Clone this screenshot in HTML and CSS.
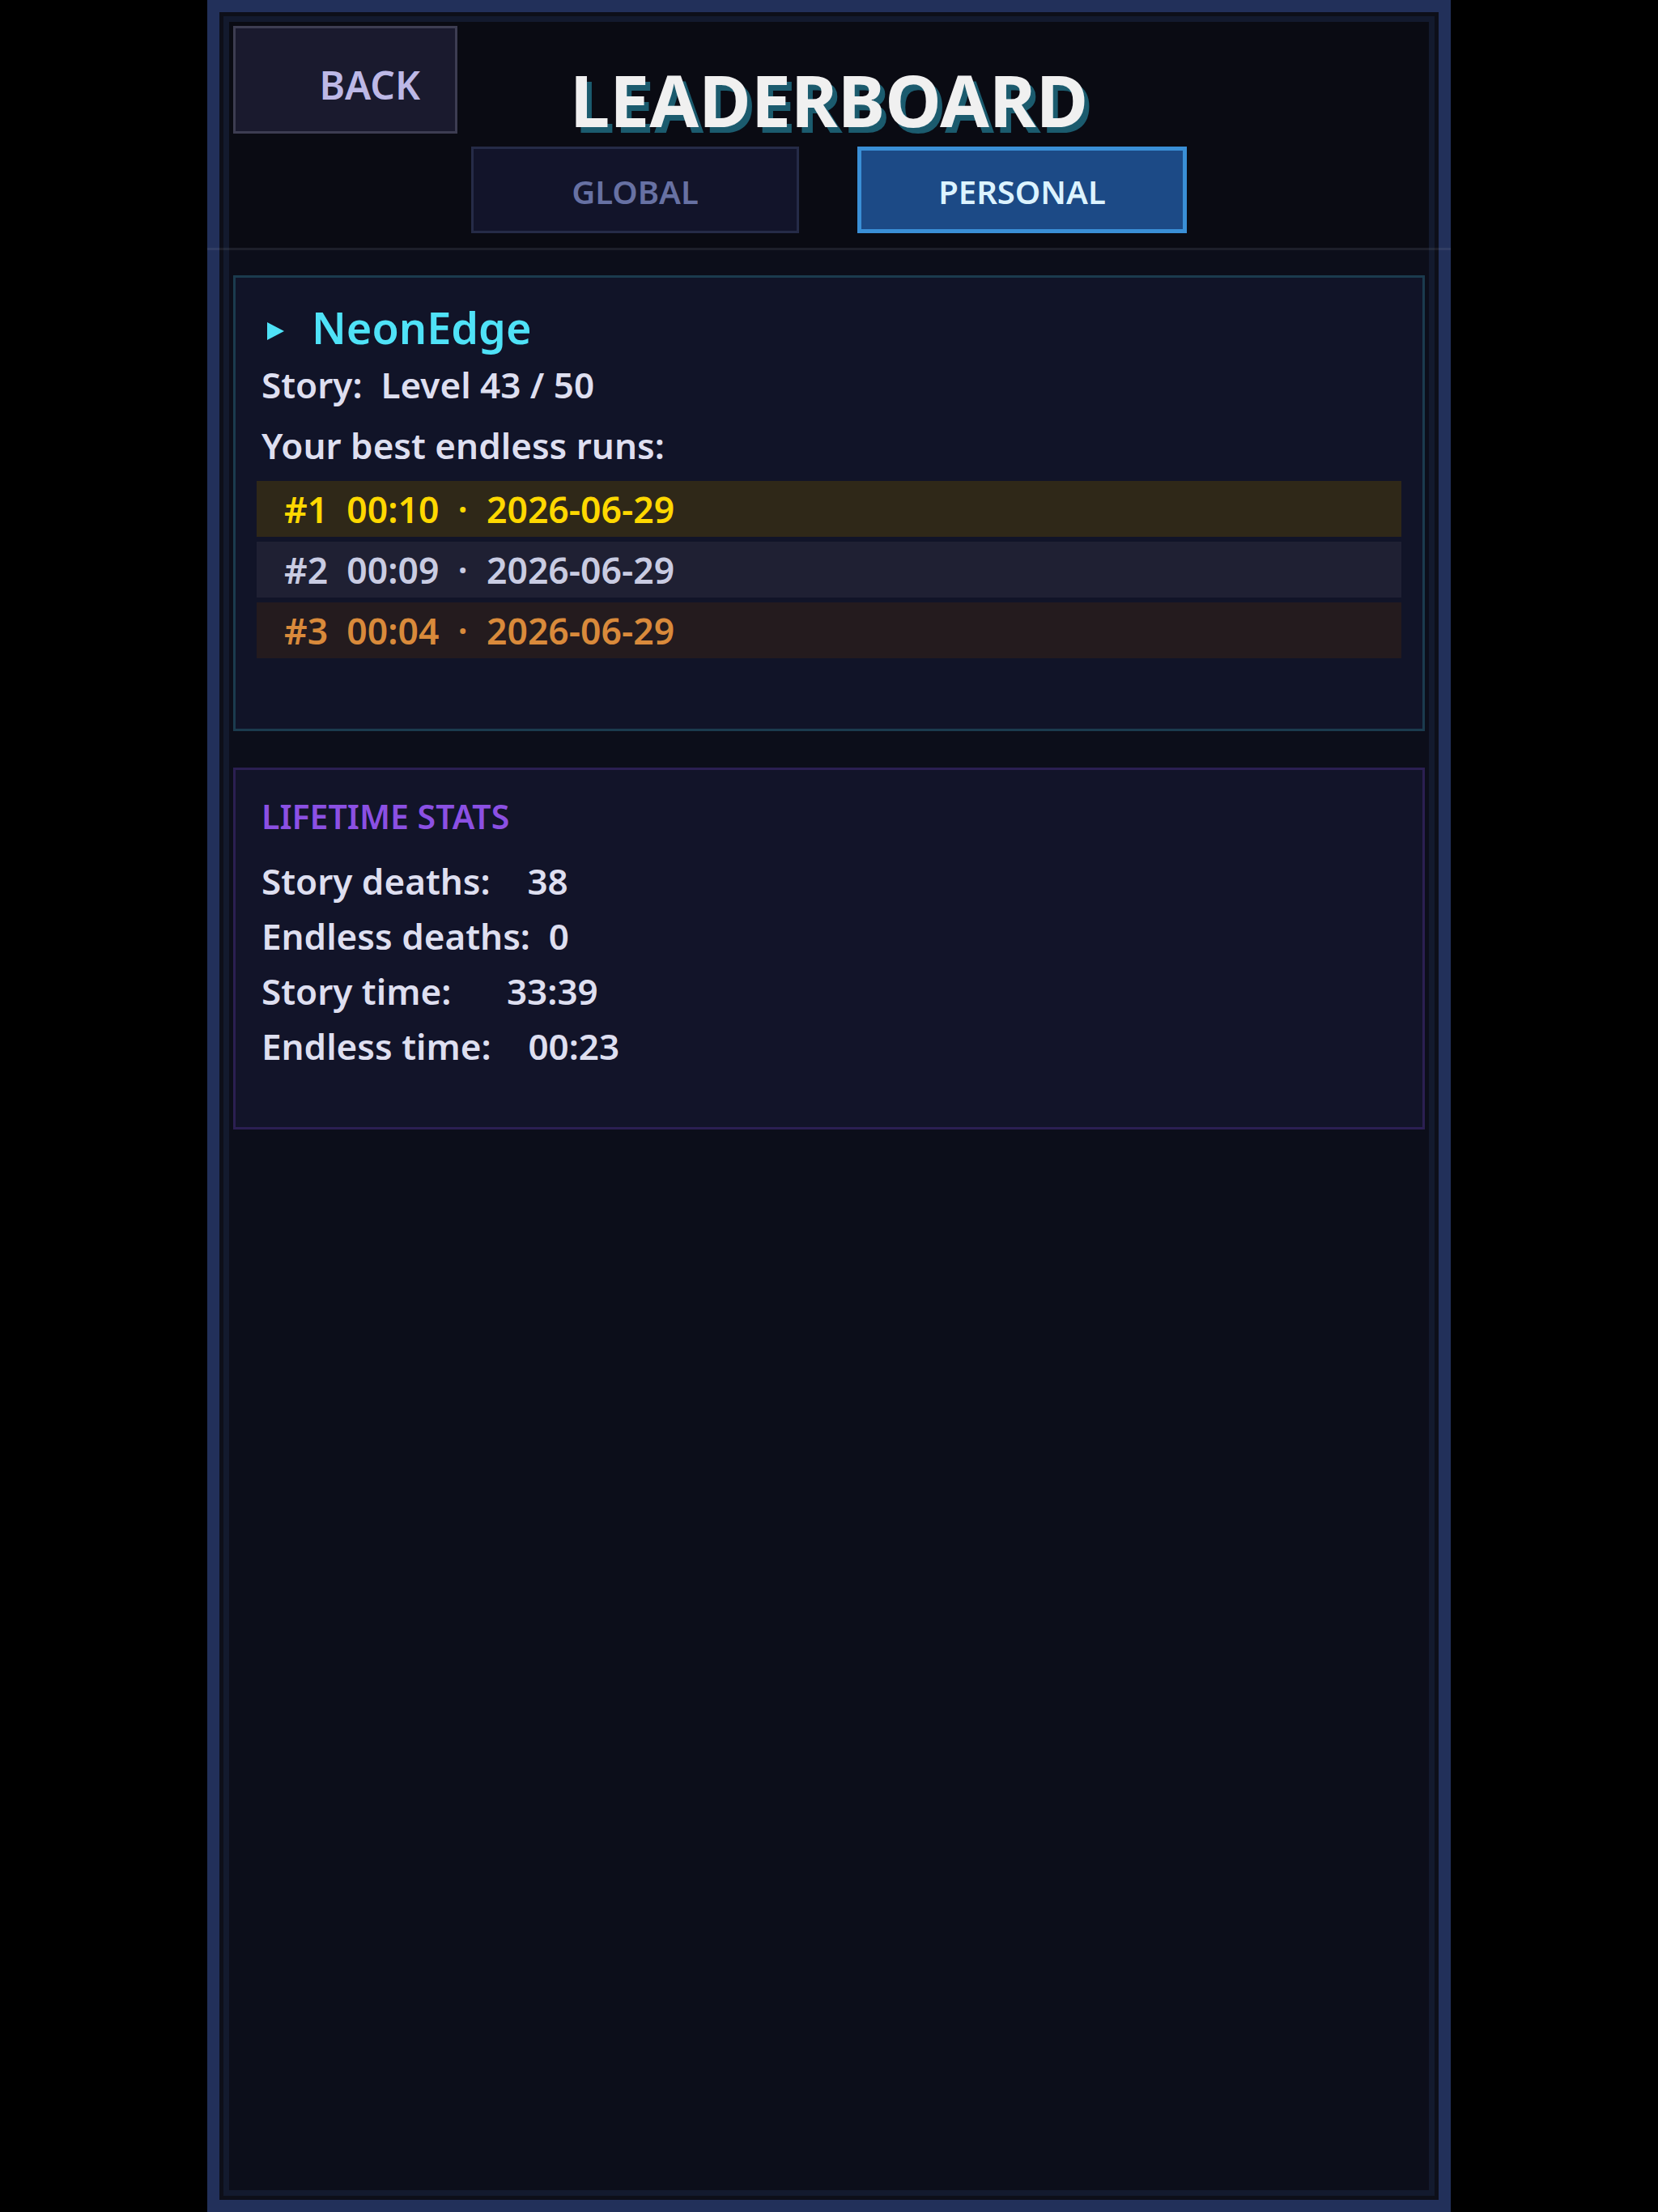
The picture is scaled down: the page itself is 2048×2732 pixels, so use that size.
FILE: index.html
```html
<!DOCTYPE html>
<html lang="en">
<head>
    <meta charset="UTF-8">
    <meta name="viewport" content="width=device-width, initial-scale=1.0">
    <title>Leaderboard</title>
    <link rel="stylesheet" href="styles.css">
</head>
<body>
    <div class="frame">
        <div class="screen">
            <header class="top">
                <div class="top-row">
                    <button class="btn-back">BACK</button>
                    <h1 class="title">LEADERBOARD</h1>
                </div>
                <div class="tabs">
                    <button class="tab">GLOBAL</button>
                    <button class="tab tab-active">PERSONAL</button>
                </div>
            </header>
            <div class="top-rule"></div>

            <main class="content">
                <!-- carte jucator -->
                <section class="card card-player">
                    <div class="player-name"><span class="marker"></span>NeonEdge</div>
                    <p class="line">Story:  Level 43 / 50</p>
                    <p class="line line-label">Your best endless runs:</p>
                    <div class="runs">
                        <div class="run run-gold">#1  00:10  ·  2026-06-29</div>
                        <div class="run run-silver">#2  00:09  ·  2026-06-29</div>
                        <div class="run run-bronze">#3  00:04  ·  2026-06-29</div>
                    </div>
                </section>

                <!-- statistici -->
                <section class="card card-stats">
                    <h2 class="stats-title">LIFETIME STATS</h2>
                    <div class="stats-list">
                        <p class="line stat">Story deaths:    38</p>
                        <p class="line stat">Endless deaths:  0</p>
                        <p class="line stat">Story time:      33:39</p>
                        <p class="line stat">Endless time:    00:23</p>
                    </div>
                </section>
            </main>
        </div>
    </div>
</body>
</html>
```

FILE: styles.css
```css
/* General */
body {
    margin: 0;
    background-color: #000000;
    display: flex;
    justify-content: center;
    font-family: "Noto Sans", "Open Sans", sans-serif;
    font-weight: 560;
}

button {
    font-family: inherit;
    font-weight: 560;
    cursor: pointer;
    margin: 0;
}

/* Frame */
.frame {
    width: 1536px;
    height: 2732px;
    box-sizing: border-box;
    border: 15px solid #22305a;
    padding: 5px;
    background-color: #0d0f19;
}

.screen {
    height: 100%;
    box-sizing: border-box;
    border: 7px solid #131a2e;
    background-color: #0c0e1a;
    display: flex;
    flex-direction: column;
}

/* Header */
.top {
    height: 279px;
    box-sizing: border-box;
    padding: 5px 5px 0;
    background-color: #0a0b13;
}

.top-row {
    display: grid;
    grid-template-columns: 1fr auto 1fr;
    align-items: start;
    height: 133px;
}

.btn-back {
    width: 277px;
    height: 133px;
    box-sizing: border-box;
    border: 3px solid #3d3d52;
    background-color: #1a1a2e;
    color: #bdb8e6;
    font-size: 48px;
    display: flex;
    align-items: center;
    justify-content: flex-end;
    padding: 12px 43px 0 0;
}

.title {
    grid-column: 2;
    margin: 47px 0 0;
    font-size: 88px;
    line-height: 88px;
    font-weight: 700;
    color: #f0f0f0;
    text-shadow: 6px 7px 0 #1b5b6e;
}

.tabs {
    display: flex;
    justify-content: center;
    gap: 72px;
    margin-top: 16px;
}

.tab {
    width: 405px;
    height: 107px;
    box-sizing: border-box;
    font-size: 40px;
    padding: 3px 0 0;
    border: 3px solid #252b47;
    background-color: #12142a;
    color: #6771a3;
}

.tab-active {
    width: 407px;
    border: 5px solid #3a8fd6;
    background-color: #1c4a86;
    color: #dcf3ff;
}

.top-rule {
    height: 3px;
    margin: 0 -27px;
    background-color: rgba(255, 255, 255, 0.07);
}

/* Content */
.content {
    padding: 31px 5px 0;
    display: flex;
    flex-direction: column;
    gap: 45px;
}

.card {
    border: 3px solid #1b3b4e;
    background-color: #111428;
}

.card-player {
    padding: 20px 26px 87px;
}

.player-name {
    display: flex;
    font-size: 54px;
    line-height: 82px;
    color: #4fe2f7;
}

.marker {
    width: 21px;
    height: 22px;
    margin: 35px 34px 0 13px;
    background-color: #4fe2f7;
    clip-path: polygon(0 0, 100% 50%, 0 100%);
}

.line {
    margin: 0 0 0 6px;
    font-size: 44px;
    line-height: 60px;
    color: #dedff0;
    white-space: pre;
}

.line-label {
    margin-top: 15px;
}

.runs {
    display: flex;
    flex-direction: column;
    gap: 6px;
    margin-top: 14px;
}

.run {
    height: 69px;
    line-height: 69px;
    padding-left: 34px;
    font-size: 44.5px;
    white-space: pre;
}

.run-gold {
    background-color: #2f2818;
    color: #ffd800;
}

.run-silver {
    background-color: #1f2033;
    color: #c9cce2;
}

.run-bronze {
    background-color: #241b1e;
    color: #d98a3b;
}

/* Lifetime stats */
.card-stats {
    border-color: #2b1f52;
    background-color: #121429;
    padding: 30px 26px 66px;
}

.stats-title {
    margin: 0 0 0 6px;
    font-size: 41px;
    line-height: 54px;
    font-weight: 560;
    color: #8b50e3;
}

.stats-list {
    margin-top: 19px;
}

.stat {
    line-height: 68px;
}
```
